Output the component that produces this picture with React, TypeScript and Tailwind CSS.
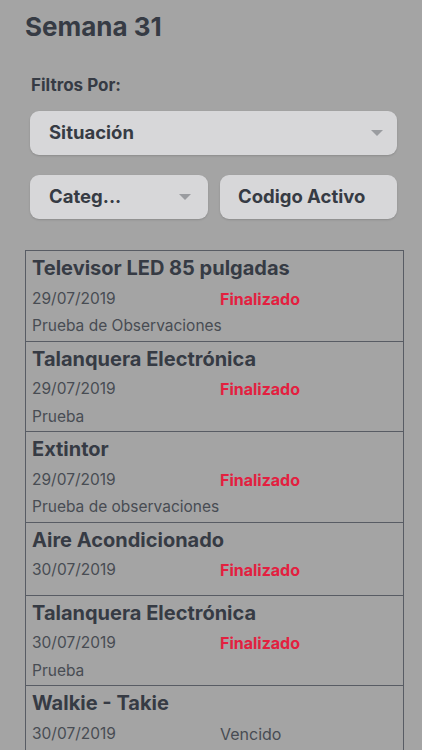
import React from "react";

type Item = { title: string; date: string; status: string; done: boolean; obs?: string };

const items: Item[] = [
  { title: "Televisor LED 85 pulgadas", date: "29/07/2019", status: "Finalizado", done: true, obs: "Prueba de Observaciones" },
  { title: "Talanquera Electrónica", date: "29/07/2019", status: "Finalizado", done: true, obs: "Prueba" },
  { title: "Extintor", date: "29/07/2019", status: "Finalizado", done: true, obs: "Prueba de observaciones" },
  { title: "Aire Acondicionado", date: "30/07/2019", status: "Finalizado", done: true },
  { title: "Talanquera Electrónica", date: "30/07/2019", status: "Finalizado", done: true, obs: "Prueba" },
  { title: "Walkie - Takie", date: "30/07/2019", status: "Vencido", done: false, obs: "Prueba" },
];

function Caret() {
  return (
    <svg width="12" height="6" viewBox="0 0 12 6" className="shrink-0">
      <path d="M0 0 L12 0 L6 6 Z" fill="#9a9ca0" />
    </svg>
  );
}

export default function App() {
  return (
    <div
      className="w-[422px] h-[750px] overflow-hidden bg-[#a4a4a4] text-[#363b44]"
      style={{ fontFamily: "Inter, 'Noto Sans', sans-serif" }}
    >
      <div className="pl-[25px] pt-[12px] text-[26px] font-bold leading-[30px]">Semana 31</div>
      <div className="pl-[31px] mt-[33px] text-[17px] font-bold leading-[20px]">Filtros Por:</div>
      <div className="ml-[30px] mr-[25px] mt-[16px] h-[44px] rounded-[9px] bg-[#d7d7d9] shadow-[0_1px_2px_rgba(0,0,0,0.15)] flex items-center justify-between pl-[19px] pr-[14px]">
        <span className="text-[18.5px] font-bold">Situación</span>
        <Caret />
      </div>
      <div className="ml-[30px] mt-[20px] flex gap-[12px]">
        <div className="w-[178px] h-[44px] rounded-[9px] bg-[#d7d7d9] shadow-[0_1px_2px_rgba(0,0,0,0.15)] flex items-center justify-between pl-[19px] pr-[17px]">
          <span className="text-[18.5px] font-bold">Categ...</span>
          <Caret />
        </div>
        <div className="w-[177px] h-[44px] rounded-[9px] bg-[#d7d7d9] shadow-[0_1px_2px_rgba(0,0,0,0.15)] flex items-center pl-[18px]">
          <span className="text-[18.5px] font-bold">Codigo Activo</span>
        </div>
      </div>
      <div className="ml-[25px] w-[379px] mt-[31px] border-[1.5px] border-b-0 border-[#585c64]">
        {items.map((it, i) => (
          <div key={i} className={`${i > 0 ? "border-t-[1.5px] border-[#585c64]" : ""} pl-[6px] pt-[4px]`}>
            <div className="h-[26px] leading-[26px] text-[20px] font-bold whitespace-nowrap">{it.title}</div>
            <div className="h-[35px] flex items-center text-[15.5px]">
              <span className="w-[188px] text-[#484c53]">{it.date}</span>
              <span className={it.done ? "text-[#e3203f] font-bold text-[16px]" : "text-[#484c53] text-[16px]"}>{it.status}</span>
            </div>
            {it.obs ? (
              <div className="h-[24.5px] leading-[20px] text-[15.5px] text-[#484c53]">{it.obs}</div>
            ) : (
              <div className="h-[7px]" />
            )}
          </div>
        ))}
      </div>
    </div>
  );
}
